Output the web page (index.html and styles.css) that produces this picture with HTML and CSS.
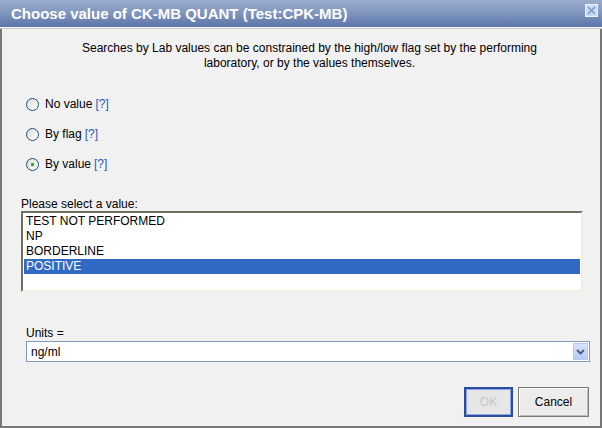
FILE: index.html
```html
<!DOCTYPE html>
<html>
<head>
<meta charset="utf-8">
<link rel="stylesheet" href="styles.css">
</head>
<body>
<div class="dialog">
  <div class="titlebar">
    <span class="title">Choose value of CK-MB QUANT (Test:CPK-MB)</span>
    <span class="close"><svg width="11" height="11" viewBox="0 0 11 11"><line x1="2" y1="2" x2="9" y2="9" stroke="#6f8fd0" stroke-width="1.3"/><line x1="9" y1="2" x2="2" y2="9" stroke="#6f8fd0" stroke-width="1.3"/></svg></span>
  </div>
  <div class="content">
    <p class="desc">Searches by Lab values can be constrained by the high/low flag set by the performing<br>laboratory, or by the values themselves.</p>
    <div class="radios">
      <label class="radio"><span class="dot"></span>No value <span class="help">[?]</span></label>
      <label class="radio"><span class="dot"></span>By flag <span class="help">[?]</span></label>
      <label class="radio"><span class="dot on"></span>By value <span class="help">[?]</span></label>
    </div>
    <div class="pick-label">Please select a value:</div>
    <div class="listbox">
      <div class="item">TEST NOT PERFORMED</div>
      <div class="item">NP</div>
      <div class="item">BORDERLINE</div>
      <div class="item sel">POSITIVE</div>
    </div>
    <div class="units-label">Units =</div>
    <div class="combo">
      <span class="combo-text">ng/ml</span>
      <span class="combo-btn"><svg width="9" height="6" viewBox="0 0 9 6"><path d="M1 1 L4.5 4.5 L8 1" fill="none" stroke="#4d6185" stroke-width="2"/></svg></span>
    </div>
    <div class="buttons">
      <button class="btn ok">OK</button>
      <button class="btn cancel">Cancel</button>
    </div>
  </div>
</div>
</body>
</html>
```
FILE: styles.css
```css
html, body { margin: 0; padding: 0; }
body {
  width: 602px; height: 428px; overflow: hidden;
  font-family: "Liberation Sans", Arial, sans-serif;
  font-size: 12px; color: #000;
}
.dialog {
  width: 602px; height: 428px; box-sizing: border-box;
  display: flex; flex-direction: column;
  background: #f1f1f1;
  border-left: 2px solid #777; border-right: 2px solid #777; border-bottom: 2px solid #777;
}
.titlebar {
  margin: 0 -2px;
  height: 27px;
  display: flex; align-items: center; justify-content: space-between;
  padding: 0 4px 0 11px;
  background: linear-gradient(#9aaccb, #7f95bd 50%, #5c74a8);
  border-bottom: 1px solid #fff;
  box-shadow: 0 1px 0 #c8c8c8;
}
.title { color: #fff; font-weight: bold; font-size: 15px; letter-spacing: 0; }
.close {
  width: 11px; height: 11px; margin-top: -6px;
  background: #cdd8f2; border: 1px solid #eef2fb; display: flex;
}
.content { flex: 1; display: flex; flex-direction: column; padding: 0 10px 0 19px; }
.desc { margin: 13px 0 0; text-align: center; line-height: 15px; padding-left: 8px; }
.radios { display: flex; flex-direction: column; gap: 16px; margin-top: 26px; padding-left: 5px; }
.radio { display: flex; align-items: center; line-height: 14px; }
.dot {
  width: 13px; height: 13px; border-radius: 50%; box-sizing: border-box;
  border: 1px solid #1c5180; background: linear-gradient(135deg, #dcdcd6, #fff);
  margin-right: 6px; position: relative;
}
.dot.on::after {
  content: ""; position: absolute; left: 4px; top: 4px; width: 3px; height: 3px;
  border-radius: 50%; background: #21a121; box-shadow: 0 0 1px #4fd04f;
}
.help { color: #2b5bb5; margin-left: 3px; }
.pick-label { margin-top: 26px; line-height: 14px; }
.listbox {
  margin-top: 0; width: 562px; height: 81px; box-sizing: border-box;
  background: #fff;
  border-top: 2px solid #716f64; border-left: 2px solid #716f64;
  border-right: 2px solid #f1efe2; border-bottom: 2px solid #f1efe2;
  padding: 1px 1px 0 1px;
}
.item { height: 15px; line-height: 15px; padding-left: 2px; }
.item.sel { background: #316ac5; color: #fff; }
.units-label { margin: 34px 0 0 5px; line-height: 14px; }
.combo {
  margin: 1px 0 0 5px; width: 564px; height: 21px; box-sizing: border-box;
  border: 1px solid #7f9db9; background: #fff;
  display: flex; align-items: center; justify-content: space-between;
}
.combo-text { padding-left: 4px; }
.combo-btn {
  width: 15px; height: 17px; margin-right: 1px;
  background: linear-gradient(#d6e2fc, #b7cbf6); border: 1px solid #b5c8f3; box-sizing: border-box;
  display: flex; align-items: center; justify-content: center;
}
.buttons { display: flex; justify-content: flex-end; gap: 5px; margin-top: 25px; padding-right: 1px; }
.btn {
  font-family: "Liberation Sans", Arial, sans-serif; font-size: 12px;
  height: 30px; box-sizing: border-box; padding: 0;
}
.ok {
  width: 49px; color: #c6c6c6; background: #e6e6e6;
  border: 2px solid #2c4ca0; box-shadow: inset 0 0 0 1px #8aa6e8;
}
.cancel {
  width: 71px; color: #000; background: #ececec;
  border: 1px solid #7a7a7a; box-shadow: inset 1px 1px 0 #fff, inset -1px -1px 0 #bbb;
}
```
